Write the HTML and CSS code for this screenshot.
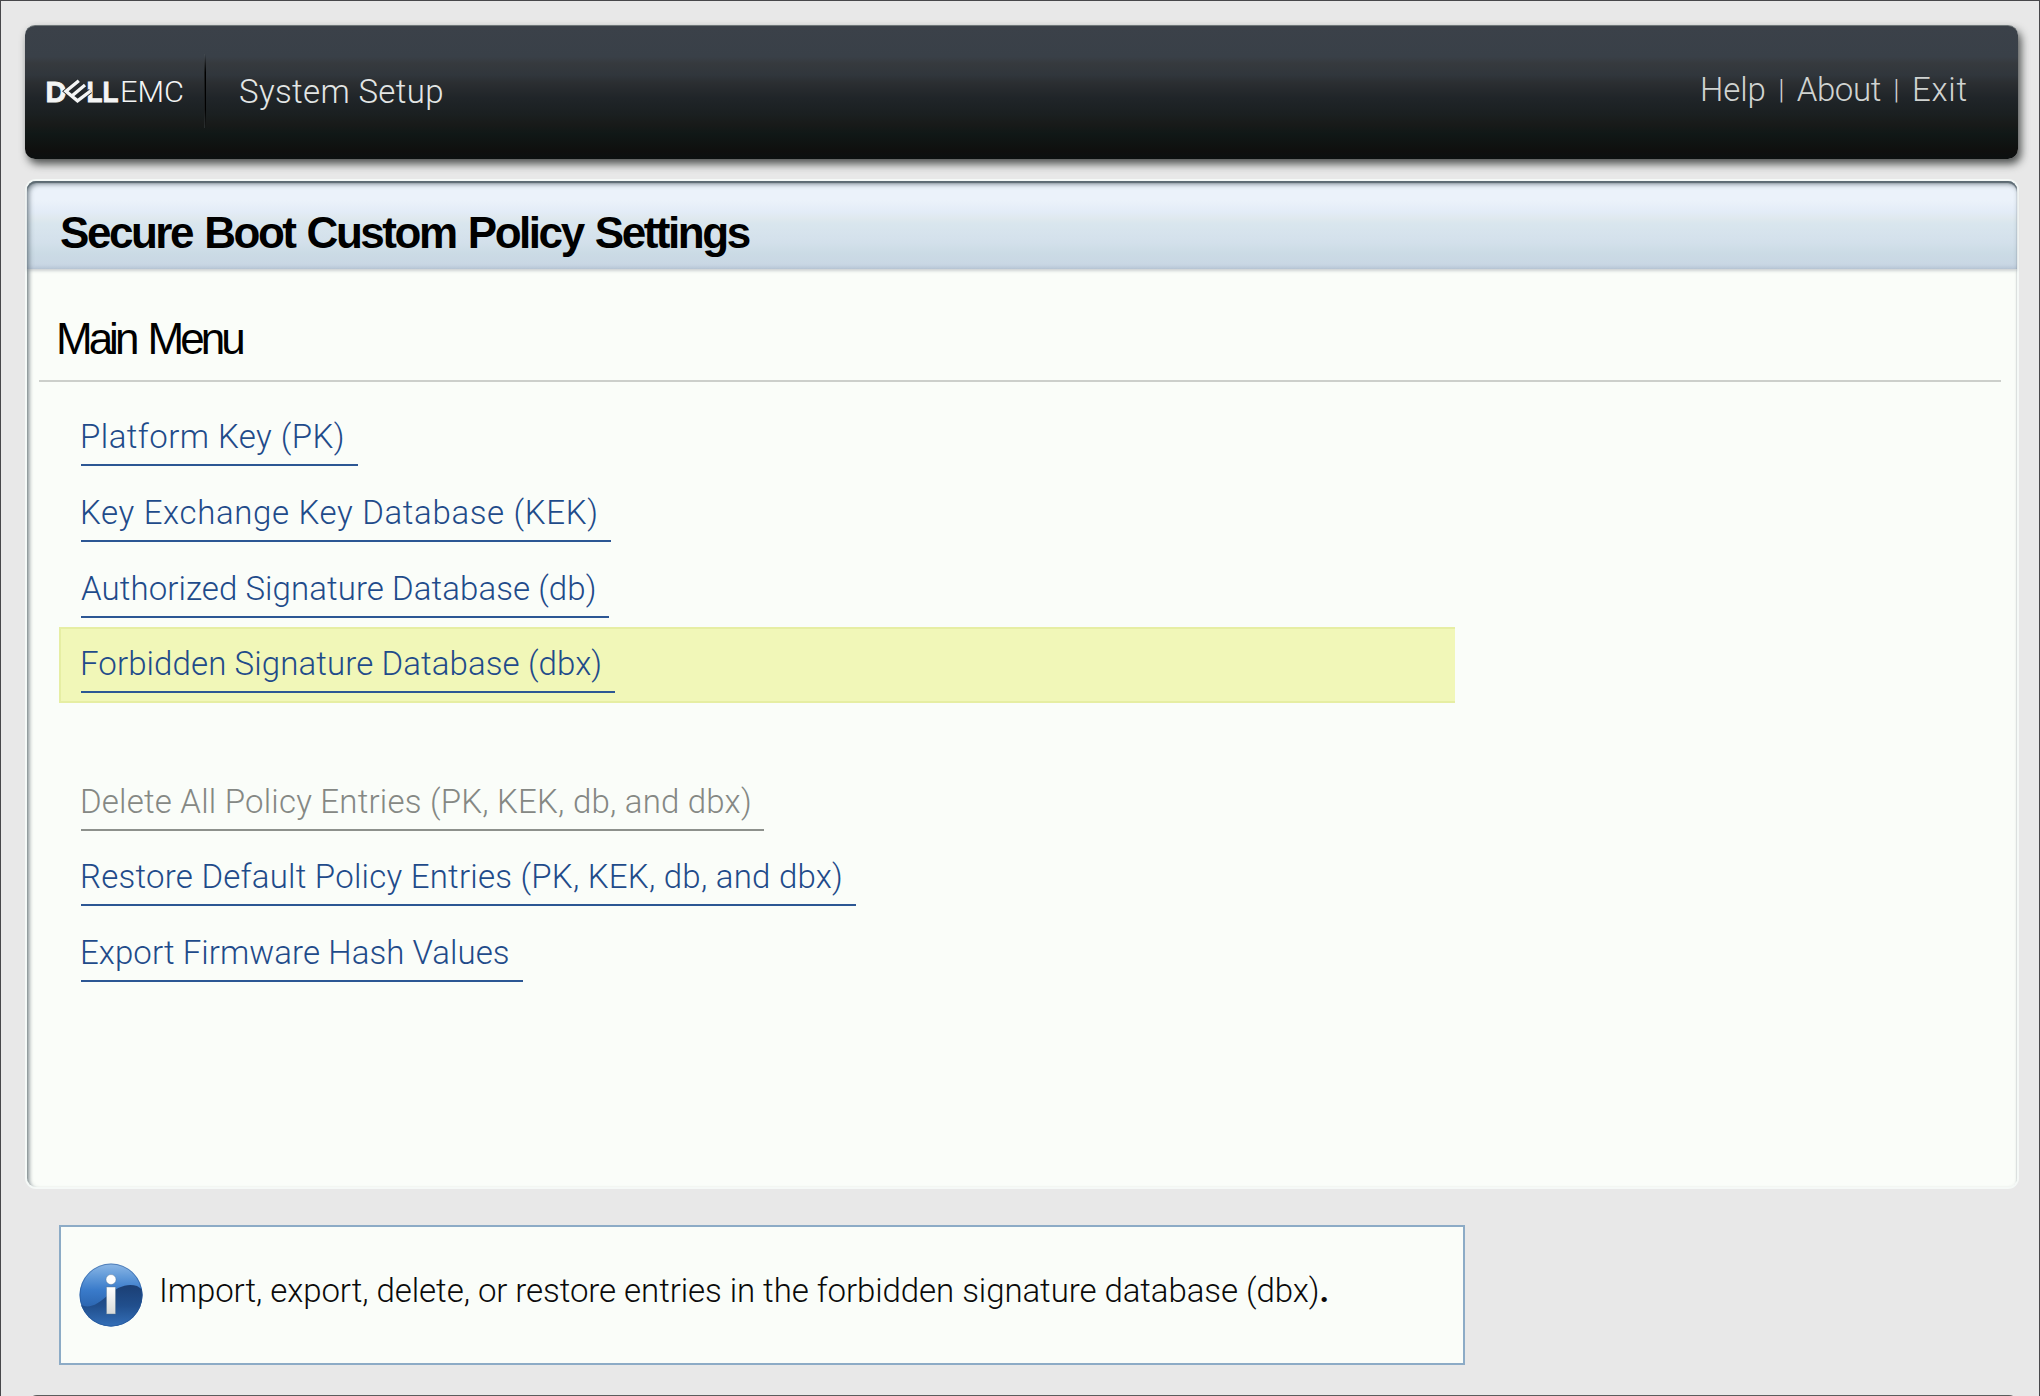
FILE: index.html
```html
<!DOCTYPE html>
<html lang="en">
<head>
<meta charset="utf-8">
<title>System Setup</title>
<link rel="stylesheet" href="styles.css">
</head>
<body>
<div class="screen">
  <header class="topbar">
    <svg class="logo" width="152" height="40" viewBox="-6 -5 152 40">
      <g fill="#f4f5f5" font-family="Liberation Sans, Arial, sans-serif">
        <text x="-1.5" y="25.5" font-size="29" font-weight="700" stroke="#f4f5f5" stroke-width=".8" textLength="21" lengthAdjust="spacingAndGlyphs">D</text>
        <text x="39.5" y="25.5" font-size="29" font-weight="700" stroke="#f4f5f5" stroke-width=".8" textLength="32" lengthAdjust="spacingAndGlyphs">LL</text>
        <text x="73" y="25.5" font-size="30" font-family="Roboto, sans-serif" font-weight="300" textLength="64" lengthAdjust="spacingAndGlyphs">EMC</text>
      </g>
      <path d="M31.8 4.8 19 15.2l11.5 9.6L43.5 15M24.8 20 38 9" fill="none" stroke="#23282c" stroke-width="5"/>
      <path d="M31.8 4.8 19 15.2l11.5 9.6L43.5 15M24.8 20 38 9" fill="none" stroke="#f4f5f5" stroke-width="3.4"/>
    </svg>
    <span class="divider"></span>
    <span class="product">System Setup</span>
    <nav class="topnav"><a>Help</a><i>|</i><a class="about">About</a><i>|</i><a class="exit">Exit</a></nav>
  </header>

  <main class="panel">
    <h1 class="title">Secure Boot Custom Policy Settings</h1>
    <h2 class="menu-title">Main Menu</h2>
    <ul class="menu">
      <li><a class="pk">Platform Key (PK)</a></li>
      <li><a class="kek">Key Exchange Key Database (KEK)</a></li>
      <li><a class="db">Authorized Signature Database (db)</a></li>
      <li class="selected"><a class="dbx">Forbidden Signature Database (dbx)</a></li>
      <li class="disabled"><a class="delete">Delete All Policy Entries (PK, KEK, db, and dbx)</a></li>
      <li><a class="restore">Restore Default Policy Entries (PK, KEK, db, and dbx)</a></li>
      <li><a class="export">Export Firmware Hash Values</a></li>
    </ul>
  </main>

  <section class="help">
    <svg class="info" width="64" height="64" viewBox="0 0 64 64">
      <defs>
        <linearGradient id="ball" x1="0" y1="0" x2="0" y2="1"><stop offset="0" stop-color="#8db8e6"/><stop offset=".22" stop-color="#5f98d8"/><stop offset=".42" stop-color="#3a7bca"/><stop offset=".7" stop-color="#2b65b0"/></linearGradient>
        <linearGradient id="wave" x1="0" y1="0" x2="0" y2="1"><stop offset="0" stop-color="#1b3f74"/><stop offset=".5" stop-color="#214f8d"/><stop offset="1" stop-color="#3470b9"/></linearGradient>
        <linearGradient id="stem" x1="0" y1="0" x2="0" y2="1"><stop offset="0" stop-color="#fff"/><stop offset="1" stop-color="#d8dad8"/></linearGradient>
        <clipPath id="round"><circle cx="32" cy="32" r="31.5"/></clipPath>
      </defs>
      <circle cx="32" cy="32" r="31.5" fill="url(#ball)"/>
      <path clip-path="url(#round)" d="M0 41c10 6 19 0 28-8 10-9 20-13 30-10l6 4v37H0z" fill="url(#wave)"/>
      <circle cx="32" cy="32" r="31" fill="none" stroke="#245396" stroke-opacity=".55"/>
      <circle cx="32" cy="16.5" r="5" fill="#fff" stroke="#54728f" stroke-opacity=".4"/>
      <rect x="27.5" y="24" width="9" height="27" fill="url(#stem)" stroke="#54728f" stroke-opacity=".4"/>
    </svg>
    <p>Import, export, delete, or restore entries in the forbidden signature database (dbx)<b>.</b></p>
  </section>
  <footer class="bottombar"></footer>
</div>
</body>
</html>
```
FILE: styles.css
```css
* { box-sizing: border-box; margin: 0; padding: 0; }

body {
  background: #e8e8e8;
  font-family: Roboto, "Liberation Sans", sans-serif;
  font-weight: 300;
  font-size: 33px;
  line-height: 40px;
}

.screen {
  width: 2040px;
  height: 1396px;
  overflow: hidden;
  border: solid #47474a;
  border-width: 1px 1px 0 1px;
  padding: 24px 21px 0 24px;
  display: flex;
  flex-direction: column;
}

.topbar {
  flex: none;
  height: 134px;
  display: flex;
  align-items: center;
  padding: 0 51px 2px 16px;
  border-radius: 10px;
  border-top: 1px solid #6e7678;
  background: linear-gradient(#3b4149 0, #394048 23%, #363a3e 28%, #30363c 37%, #2b2e31 43%, #202529 54%, #1a1f20 67%, #181a19 74%, #101817 81%, #0f0f0e 94%, #0c1010);
  box-shadow: 3px 5px 8px rgba(25, 30, 28, .75);
  color: #e3e6e5;
}

.logo { flex: none; margin-top: -2px; }

.divider {
  width: 2px;
  height: 74px;
  margin: -2px 0 0 11px;
  background: linear-gradient(transparent, #000 25%, #000 75%, transparent);
  border-left: 1px solid rgba(90, 95, 98, .3);
}

.product { margin-left: 33px; letter-spacing: .35px; }

.topnav { margin-left: auto; display: flex; padding-bottom: 3px; color: #d0d3d1; }
.topnav a { letter-spacing: -.1px; }
.topnav i { font-style: normal; font-size: 28px; font-weight: 300; width: 31px; text-align: center; }
.topnav .about { letter-spacing: -.4px; }
.topnav .exit { letter-spacing: .8px; margin-right: -1px; }

.panel {
  flex: none;
  width: 1990px;
  height: 1006px;
  margin: 22px 0 0 2px;
  border-radius: 9px;
  background: #fafdf9;
  box-shadow: inset 0 2px 1px #627078, inset 2px 3px 4px rgba(75, 90, 98, .75), 0 0 0 2px #f5f9f7;
}

.title {
  height: 88px;
  padding: 11px 0 0 33px;
  border-radius: 9px 9px 0 0;
  background: linear-gradient(#ebf2fa 22%, #e3ecf7 35%, #dfe8ee 43%, #d9e6ee 48%, #d3e0eb 70%, #cbdbe5 82%, #c9d7e4 94%, #bdcbdc 100%);
  box-shadow: inset 0 2px 1px #5c6a72, inset 2px 3px 5px rgba(75, 90, 98, .7), 0 2px 3px rgba(120, 130, 140, .35);
  font: 700 44px/82px "Liberation Sans", Arial, sans-serif;
  letter-spacing: -2.45px;
  word-spacing: 2.3px;
  color: #000;
}

.menu-title {
  height: 113px;
  margin: 0 16px 0 12px;
  padding: 28px 0 0 17px;
  border-bottom: 2px solid #cccfcb;
  font: 400 44px/84px "Liberation Sans", Arial, sans-serif;
  letter-spacing: -4px;
  word-spacing: 4px;
  color: #000;
}

.menu { list-style: none; padding: 18px 0 0 32px; }

.menu li {
  width: 1396px;
  height: 75.75px;
  padding: 13px 0 0 20px;
  border: solid transparent;
  border-width: 2px 0 2px 2px;
}

.menu li.selected { background: #f1f7b8; border-color: #e6eea3; }
.menu li.disabled { margin-top: 61.5px; }

.menu a {
  display: block;
  height: 51px;
  border-bottom: 2px solid #2c5794;
  color: #1f4b8a;
  line-height: 38px;
  padding-top: 3px;
  text-indent: -1px;
  white-space: nowrap;
}

.menu .disabled a { color: #858884; border-color: #8d918c; }

.menu .pk { width: 277px; letter-spacing: .45px; }
.menu .kek { width: 530px; letter-spacing: .66px; }
.menu .db { width: 528px; letter-spacing: .08px; text-indent: 0; }
.menu .dbx { width: 534px; letter-spacing: .11px; }
.menu .delete { width: 683px; letter-spacing: .21px; }
.menu .restore { width: 775px; letter-spacing: .24px; }
.menu .export { width: 442px; letter-spacing: .07px; }

.help {
  flex: none;
  width: 1406px;
  height: 140px;
  margin: 38px 0 0 34px;
  padding-left: 18px;
  display: flex;
  align-items: center;
  border: 2px solid #8cabc6;
  background: #fafdf9;
  color: #0a0a0a;
}

.help p { margin: -9px 0 0 16px; letter-spacing: -.07px; white-space: nowrap; }
.help b { font-weight: 700; }

.bottombar { flex: none; height: 12px; margin: 30px 0 0 3px; width: 1990px; border-radius: 9px 9px 0 0; background: #5b5c5c; }
```
